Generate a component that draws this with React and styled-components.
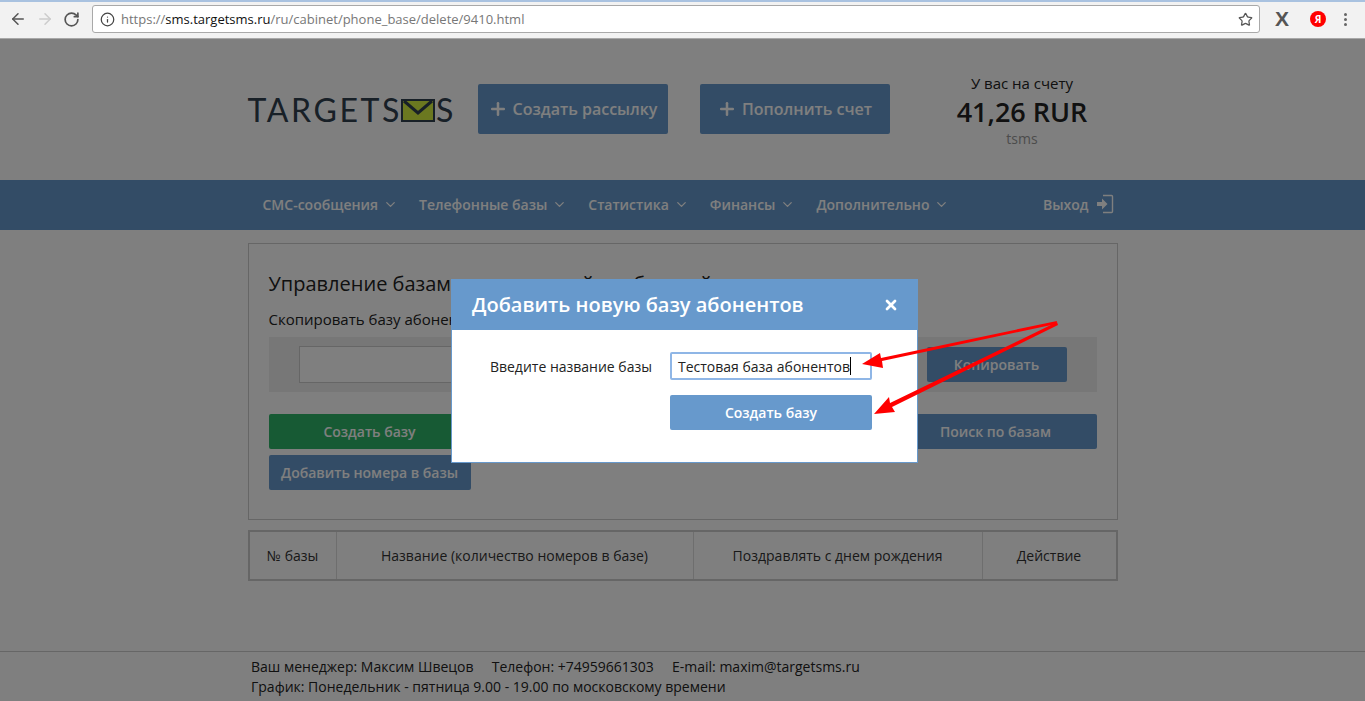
import React from 'react'
import styled, { createGlobalStyle } from 'styled-components'
import { ArrowLeft, ArrowRight, RotateCw, Info, Star, Plus, ChevronDown, X } from 'lucide-react'

const GlobalStyle = createGlobalStyle`
  html, body { margin: 0; padding: 0; height: 100%; overflow: hidden; background: #fff; }
  body { font-family: "Open Sans", "Noto Sans", sans-serif; color: #222; }
  * { box-sizing: border-box; }
`

const Page = styled.div`
  position: relative;
  width: 1365px;
  height: 701px;
  display: flex;
  flex-direction: column;
  overflow: hidden;
`

const TabStrip = styled.div`
  height: 2px;
  background: #a9c2e0;
`

const Toolbar = styled.div`
  height: 37px;
  background: #f2f2f2;
  border-bottom: 1px solid #a8a8a8;
  display: flex;
  align-items: center;
  padding: 0 7px 2px 9px;
`

const NavIcons = styled.div`
  display: flex;
  align-items: center;
  gap: 9px;
  width: 83px;
  flex-shrink: 0;
`

const Omnibox = styled.div`
  width: 1168px;
  height: 28px;
  background: #fff;
  border: 1px solid #a9a9a9;
  border-radius: 3px;
  display: flex;
  align-items: center;
  padding: 0 6px 0 7px;
  font-family: "Open Sans", sans-serif;
  font-size: 13px;
  color: #777;
`

const Url = styled.span`
  margin-left: 6px;
  flex: 1;
  white-space: nowrap;
  b { font-weight: 400; color: #111; }
`

const BigX = styled.span`
  margin-left: 10px;
  font-family: "Liberation Sans", sans-serif;
  font-size: 21px;
  font-weight: 700;
  color: #555;
  width: 24px;
  text-align: center;
`

const YandexBadge = styled.span`
  margin-left: 16px;
  width: 16px;
  height: 16px;
  border-radius: 50%;
  background: #f00;
  color: #fff;
  font-size: 10px;
  font-weight: 700;
  display: flex;
  align-items: center;
  justify-content: center;
`

const Dots = styled.span`
  margin-left: 18px;
  display: flex;
  flex-direction: column;
  gap: 2px;
  i { width: 3px; height: 3px; border-radius: 50%; background: #666; display: block; }
`

const Container = styled.div`
  width: 870px;
  margin: 0 auto;
`

const Header = styled(Container)`
  height: 141px;
  display: flex;
  align-items: flex-start;
`

const Logo = styled.div`
  width: 230px;
  margin-top: 53px;
  display: flex;
  align-items: center;
  font-family: "Lato", sans-serif;
  font-size: 32px;
  line-height: 36px;
  letter-spacing: 2.6px;
  color: #30404f;
  svg { margin: 0 1px 0 -1px; }
`

const ActionButton = styled.div`
  width: 190px;
  height: 50px;
  margin: 45px 32px 0 0;
  background: #6799cc;
  border-radius: 2px;
  display: flex;
  align-items: center;
  justify-content: center;
  gap: 5px;
  color: #fff;
  font-size: 16px;
  font-weight: 600;
`

const Balance = styled.div`
  flex: 1;
  margin-top: 33px;
  margin-left: 5px;
  text-align: center;
  font-size: 15px;
  line-height: 22px;
  color: #222;
`

const Amount = styled.div`
  font-size: 27px;
  font-weight: 600;
  line-height: 35px;
`

const Muted = styled.div`
  font-size: 14px;
  line-height: 20px;
  color: #999;
`

const NavBar = styled.div`
  height: 50px;
  background: #6799cc;
`

const NavRow = styled(Container)`
  height: 50px;
  display: flex;
  align-items: center;
  padding: 0 4px 2px 15px;
  color: #fff;
  font-size: 14px;
  font-weight: 600;
`

const NavItem = styled.span`
  display: flex;
  align-items: center;
  gap: 5px;
  margin-right: 21px;
  white-space: nowrap;
`

const Logout = styled.span`
  margin-left: auto;
  display: flex;
  align-items: center;
  gap: 7px;
`

const Panel = styled(Container)`
  height: 277px;
  margin-top: 13px;
  border: 1px solid #ccc;
  padding: 26px 20px 0;
`

const PanelTitle = styled.div`
  font-size: 20px;
  line-height: 27px;
  color: #222;
`

const CopyLabel = styled.div`
  font-size: 15px;
  line-height: 20px;
  margin-top: 12px;
`

const CopyBand = styled.div`
  height: 55px;
  margin-top: 8px;
  background: #eee;
  display: flex;
  align-items: center;
  justify-content: space-between;
  padding: 0 30px;
`

const BaseInput = styled.div`
  width: 300px;
  height: 37px;
  background: #fff;
  border: 1px solid #ccc;
`

const Button = styled.div`
  height: 35px;
  width: ${p => p.$width || 202}px;
  background: ${p => p.$bg || '#6799cc'};
  border-radius: 2px;
  color: #fff;
  font-size: 14px;
  font-weight: 600;
  display: flex;
  align-items: center;
  justify-content: center;
`

const ButtonRow = styled.div`
  display: flex;
  justify-content: space-between;
  margin-top: 22px;
`

const SecondRow = styled.div`
  margin-top: 6px;
`

const BaseTable = styled(Container)`
  height: 51px;
  margin-top: 10px;
  border: 2px solid #ccc;
  display: grid;
  grid-template-columns: 86px 357px 289px 1fr;
  font-size: 14px;
  color: #333;
`

const HeadCell = styled.div`
  display: flex;
  align-items: center;
  justify-content: center;
  border-left: ${p => (p.$first ? 'none' : '1px solid #ddd')};
`

const Footer = styled.div`
  margin-top: auto;
  height: 50px;
  border-top: 1px solid #ccc;
  font-size: 14px;
  line-height: 20px;
  color: #222;
  padding: 5px 0 0 251px;
`

const FooterLine = styled.div`
  white-space: pre;
`

const Overlay = styled.div`
  position: absolute;
  left: 0;
  right: 0;
  top: 39px;
  bottom: 0;
  background: rgba(0, 0, 0, 0.5);
  padding: 240px 0 0 451px;
`

const Modal = styled.div`
  width: 467px;
  height: 184px;
  background: #fff;
  border: 1px solid #6799cc;
  border-top: none;
`

const ModalHead = styled.div`
  height: 51px;
  margin: 0 -1px;
  background: #6799cc;
  display: flex;
  align-items: center;
  justify-content: space-between;
  padding: 0 19px 0 21px;
  color: #fff;
  font-size: 20px;
  font-weight: 600;
`

const FormGrid = styled.div`
  display: grid;
  grid-template-columns: 200px 202px;
  column-gap: 18px;
  row-gap: 15px;
  padding: 22px 0 0 0;
  align-items: center;
`

const FieldLabel = styled.div`
  text-align: right;
  font-size: 14px;
  color: #222;
`

const NameInput = styled.div`
  height: 28px;
  border: 2px solid #8fb6e6;
  border-radius: 2px;
  display: flex;
  align-items: center;
  padding-left: 6px;
  font-size: 14px;
  color: #222;
  white-space: nowrap;
  &::after { content: ''; width: 1px; height: 18px; background: #000; }
`

const Arrows = styled.svg`
  position: absolute;
  left: 0;
  top: 0;
  pointer-events: none;
`

const Envelope = () => (
  <svg width="34" height="23" viewBox="0 0 34 23">
    <rect width="34" height="23" fill="#30404f" />
    <rect x="2" y="2" width="30" height="19" fill="#d6f040" />
    <path d="M3 2 L17 14 L31 2" fill="none" stroke="#30404f" strokeWidth="3" />
  </svg>
)

const LogoutIcon = () => (
  <svg width="18" height="20" viewBox="0 0 18 20" fill="none">
    <path d="M7 1.5h8.5a1 1 0 0 1 1 1v15a1 1 0 0 1-1 1H7" stroke="#fff" strokeWidth="1.4" />
    <path d="M1 8h5V4.5l5.5 5.5L6 15.5V12H1z" fill="#fff" />
  </svg>
)

const menu = ['СМС-сообщения', 'Телефонные базы', 'Статистика', 'Финансы', 'Дополнительно']
const columns = ['№ базы', 'Название (количество номеров в базе)', 'Поздравлять с днем рождения', 'Действие']

export default function App() {
  return (
    <Page>
      <GlobalStyle />
      <TabStrip />
      <Toolbar>
        <NavIcons>
          <ArrowLeft size={18} color="#555" strokeWidth={2} />
          <ArrowRight size={18} color="#ccc" strokeWidth={2} />
          <RotateCw size={17} color="#555" strokeWidth={2.4} />
        </NavIcons>
        <Omnibox>
          <Info size={15} color="#444" strokeWidth={2} />
          <Url>https://<b>sms.targetsms.ru</b>/ru/cabinet/phone_base/delete/9410.html</Url>
          <Star size={15} color="#555" strokeWidth={2} />
        </Omnibox>
        <BigX>X</BigX>
        <YandexBadge>Я</YandexBadge>
        <Dots><i /><i /><i /></Dots>
      </Toolbar>
      <Header>
        <Logo>TARGETS<Envelope />S</Logo>
        <ActionButton><Plus size={20} strokeWidth={3} />Создать рассылку</ActionButton>
        <ActionButton><Plus size={20} strokeWidth={3} />Пополнить счет</ActionButton>
        <Balance>
          У вас на счету
          <Amount>41,26 RUR</Amount>
          <Muted>tsms</Muted>
        </Balance>
      </Header>
      <NavBar>
        <NavRow>
          {menu.map(item => (
            <NavItem key={item}>{item}<ChevronDown size={15} strokeWidth={2} /></NavItem>
          ))}
          <Logout>Выход<LogoutIcon /></Logout>
        </NavRow>
      </NavBar>
      <Panel>
        <PanelTitle>Управление базами получателей сообщений</PanelTitle>
        <CopyLabel>Скопировать базу абонентов</CopyLabel>
        <CopyBand>
          <BaseInput />
          <Button $width={140}>Копировать</Button>
        </CopyBand>
        <ButtonRow>
          <Button $bg="#2fb568">Создать базу</Button>
          <Button>Поиск по базам</Button>
        </ButtonRow>
        <SecondRow>
          <Button>Добавить номера в базы</Button>
        </SecondRow>
      </Panel>
      <BaseTable>
        {columns.map((c, i) => <HeadCell key={c} $first={i === 0}>{c}</HeadCell>)}
      </BaseTable>
      <Footer>
        <FooterLine>Ваш менеджер: Максим Швецов     Телефон: +74959661303     E-mail: maxim@targetsms.ru</FooterLine>
        <FooterLine>График: Понедельник - пятница 9.00 - 19.00 по московскому времени</FooterLine>
      </Footer>
      <Overlay>
        <Modal>
          <ModalHead>
            Добавить новую базу абонентов
            <X size={16} strokeWidth={4} />
          </ModalHead>
          <FormGrid>
            <FieldLabel>Введите название базы</FieldLabel>
            <NameInput>Тестовая база абонентов</NameInput>
            <span />
            <Button>Создать базу</Button>
          </FormGrid>
        </Modal>
      </Overlay>
      <Arrows width="1365" height="701" viewBox="0 0 1365 701">
        <polygon fill="#f00" points="1057,321 1056,324 882,361 883,368 862,364 880,353 881,358" />
        <polygon fill="#f00" points="1057,322 1058,325 892,407 895,412 874,414 889,397 890,403" />
      </Arrows>
    </Page>
  )
}
